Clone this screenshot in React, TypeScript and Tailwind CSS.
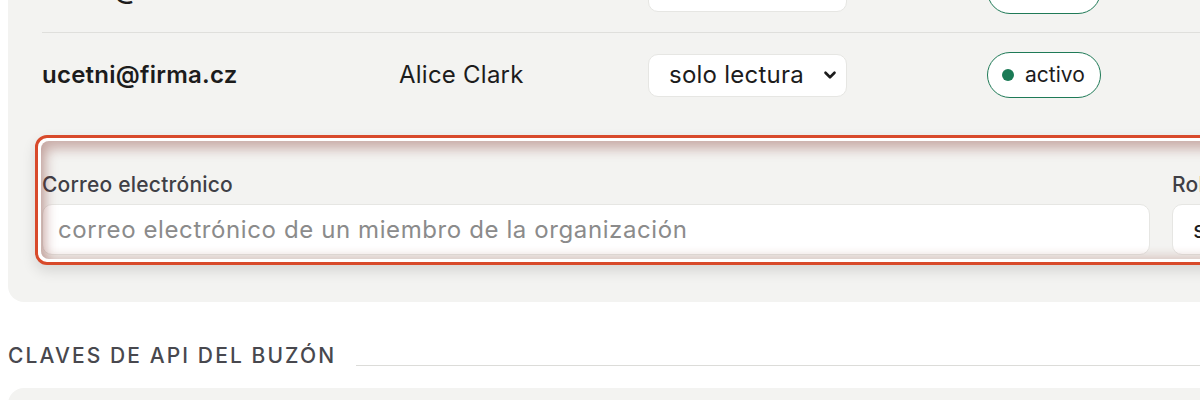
import { ChevronDown } from 'lucide-react'

type Member = {
  email: string
  name: string
  role: string
  status: string
}

const members: Member[] = [
  { email: 'admin@firma.cz', name: 'Jan Novák', role: 'administrador', status: 'activo' },
  { email: 'ucetni@firma.cz', name: 'Alice Clark', role: 'solo lectura', status: 'activo' },
]

function RoleSelect({ value, className = '' }: { value: string; className?: string }) {
  return (
    <div className={`relative h-[43px] ${className}`}>
      <select
        defaultValue={value}
        className="h-full w-full appearance-none rounded-[10px] border border-[#e6e6e3] bg-white pl-5 pr-9 text-[24px] tracking-[0.01em] text-[#1c1c1c] outline-none"
      >
        <option>administrador</option>
        <option>solo lectura</option>
        <option>editor</option>
      </select>
      <ChevronDown
        size={18}
        strokeWidth={3.5}
        className="pointer-events-none absolute right-[8px] top-1/2 -translate-y-1/2 text-[#1c1c1c]"
      />
    </div>
  )
}

function StatusBadge({ label }: { label: string }) {
  return (
    <span className="inline-flex h-[46px] w-[114px] items-center gap-[11px] rounded-full border-[1.5px] border-[#1f7a57] bg-white pl-[14px] text-[21px] text-[#1c1c1c]">
      <span className="h-[12px] w-[12px] rounded-full bg-[#1a7a55]" />
      {label}
    </span>
  )
}

export default function App() {
  return (
    <div className="w-full overflow-hidden bg-white font-['Inter','Noto_Sans',sans-serif]">
      <div className="-mt-[75px] pl-2">
        {/* tarjeta de miembros */}
        <div className="w-[1300px] rounded-2xl bg-[#f3f3f1] pb-[37px] pl-[34px] pt-6">
          {members.map((m, i) => (
            <div
              key={m.email}
              className={`grid h-[84px] grid-cols-[357px_249px_339px_1fr] items-center ${
                i < members.length - 1 ? 'border-b border-[#dfdfdc]' : ''
              }`}
            >
              <span className="text-[24px] font-semibold tracking-[0.01em] text-[#1c1c1c]">{m.email}</span>
              <span className="text-[24px] tracking-[0.01em] text-[#1c1c1c]">{m.name}</span>
              <RoleSelect value={m.role} className="w-[199px]" />
              <div>
                <StatusBadge label={m.status} />
              </div>
            </div>
          ))}

          {/* formulario de invitación resaltado */}
          <div className="-ml-[7px] mt-[18px] rounded-[12px] border-[3px] border-[#d84a2b] bg-white p-[3px] shadow-[0_6px_14px_rgba(0,0,0,0.12)]">
            <div className="relative rounded-[8px] bg-[#f3f3f1] pb-1 pl-[1px] pt-[30px]">
              <div className="grid grid-cols-[1108px_1fr] gap-x-[22px] gap-y-[5px]">
                <label className="text-[21px] font-medium leading-[28px] tracking-[0.01em] text-[#3f3f46]">
                  Correo electrónico
                </label>
                <label className="text-[21px] font-medium leading-[28px] tracking-[0.01em] text-[#3f3f46]">Rol</label>
                <input
                  placeholder="correo electrónico de un miembro de la organización"
                  className="h-[51px] rounded-[10px] border border-[#e6e6e3] bg-white px-[15px] text-[24px] tracking-[0.025em] text-[#1c1c1c] outline-none placeholder:text-[#8b8b8b]"
                />
                <div className="relative h-[51px] w-[200px]">
                  <select className="h-full w-full appearance-none rounded-[10px] border border-[#e6e6e3] bg-white pl-5 text-[24px] text-[#1c1c1c] outline-none">
                    <option>solo lectura</option>
                  </select>
                </div>
              </div>
              <div className="pointer-events-none absolute inset-0 rounded-[8px] shadow-[inset_5px_8px_12px_rgba(130,50,40,0.34),inset_0_-5px_8px_rgba(130,50,40,0.16)]" />
            </div>
          </div>
        </div>

        {/* claves de API */}
        <div className="mt-[40px] flex items-end gap-5">
          <h2 className="whitespace-nowrap text-[21px] font-medium uppercase leading-[28px] tracking-[0.1em] text-[#48484e]">
            Claves de API del buzón
          </h2>
          <div className="mb-[4px] h-px flex-1 bg-[#dcdcd9]" />
        </div>
        <div className="mt-[18px] h-[60px] w-[1300px] rounded-2xl bg-[#f3f3f1]" />
      </div>
    </div>
  )
}
